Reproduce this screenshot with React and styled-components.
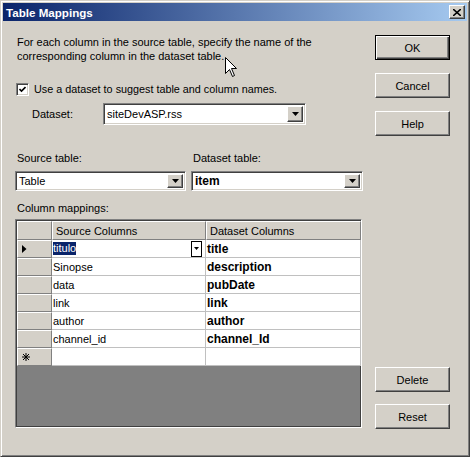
import React from 'react';
import styled, { createGlobalStyle, css } from 'styled-components';

const font = `"Liberation Sans", Arial, sans-serif`;

const GlobalStyle = createGlobalStyle`
    body {
        margin: 0;
        font-family: ${font};
        font-size: 11px;
        color: #000;
    }
`;

//Win2k 3d edges
const raised = css`
    border: 1px solid;
    border-color: #fff #404040 #404040 #fff;
    box-shadow: inset -1px -1px #808080, inset 1px 1px #d4d0c8;
`;

const sunken = css`
    border: 1px solid;
    border-color: #808080 #fff #fff #808080;
    box-shadow: inset 1px 1px #404040, inset -1px -1px #d4d0c8;
`;

const ScWindow = styled.div`
    position: relative;
    width: 470px;
    height: 457px;
    box-sizing: border-box;
    background: #d4d0c8;
    border: 1px solid;
    border-color: #d4d0c8 #404040 #404040 #d4d0c8;
    box-shadow: inset 1px 1px #fff, inset -1px -1px #808080;
    padding: 2px;
    display: flex;
    flex-direction: column;
`;

const ScTitleBar = styled.div`
    height: 18px;
    background: linear-gradient(to right, #0a246a, #a6caf0);
    display: flex;
    align-items: center;
    justify-content: space-between;
    padding: 0 2px 0 3px;
    color: #fff;
    font-weight: bold;
    font-size: 11.6px;
`;

const ScCloseButton = styled.div`
    width: 16px;
    height: 14px;
    box-sizing: border-box;
    background: #d4d0c8;
    ${raised};
    display: flex;
    align-items: center;
    justify-content: center;
`;

const ScBody = styled.div`
    flex: 1;
    display: flex;
    padding: 0 14px 0 12px;
    gap: 13px;
`;

const ScMain = styled.div`
    width: 347px;
    display: flex;
    flex-direction: column;
`;

const ScSide = styled.div`
    width: 75px;
    display: flex;
    flex-direction: column;
    padding-top: 14px;
`;

const ScIntro = styled.p`
    margin: 14px 0 0 2px;
    line-height: 14px;
`;

const ScCheckRow = styled.label`
    display: flex;
    align-items: center;
    gap: 5px;
    height: 16px;
    margin-top: 18px;
    padding-left: 1px;
    font-size: 10.8px;
`;

const ScCheckBox = styled.span`
    width: 13px;
    height: 13px;
    box-sizing: border-box;
    background: #fff;
    ${sunken};
    display: flex;
    align-items: center;
    justify-content: center;
`;

const ScDatasetRow = styled.div`
    display: flex;
    align-items: center;
    margin-top: 6px;
    padding-left: 17px;
`;

const ScDatasetLabel = styled.span`
    width: 71px;
`;

const ScLabel = styled.div`
    line-height: 14px;
    padding-left: 2px;
`;

const ScTablesGrid = styled.div`
    display: grid;
    grid-template-columns: 171px 172px;
    column-gap: 5px;
    row-gap: 6px;
    margin-top: 26px;
`;

const ScCombo = styled.div`
    width: ${p => p.$width}px;
    height: ${p => p.$height}px;
    box-sizing: border-box;
    background: #fff;
    ${sunken};
    padding: 2px;
    display: flex;
    align-items: stretch;
`;

const ScComboText = styled.span`
    flex: 1;
    display: flex;
    align-items: center;
    padding-left: 1px;
    font-weight: ${p => (p.$bold ? 'bold' : 'normal')};
    font-size: ${p => (p.$bold ? '12px' : '11px')};
`;

const ScDropButton = styled.span`
    width: 16px;
    box-sizing: border-box;
    background: #d4d0c8;
    ${raised};
    display: flex;
    align-items: center;
    justify-content: center;
`;

const ScMappingsLabel = styled(ScLabel)`
    margin-top: 10px;
`;

const ScGridWell = styled.div`
    margin-top: 4px;
    height: 209px;
    box-sizing: border-box;
    border: 1px solid;
    border-color: #808080 #fff #fff #808080;
    padding: 1px;
    background: #404040;
    overflow: hidden;
`;

const ScGridInner = styled.div`
    height: 100%;
    background: #808080;
`;

const ScGridRow = styled.div`
    display: grid;
    grid-template-columns: 35px 154px 155px;
    height: ${p => (p.$header ? 19 : 18)}px;
`;

const ScHeadCell = styled.div`
    background: #d4d0c8;
    box-sizing: border-box;
    border-style: solid;
    border-width: 1px;
    border-color: #fff #808080 #808080 #fff;
    display: flex;
    align-items: center;
    padding-left: 3px;
`;

const ScRowHead = styled(ScHeadCell)`
    padding-left: 4px;
`;

const ScCell = styled.div`
    background: #fff;
    box-sizing: border-box;
    border-right: 1px solid #c0c0c0;
    border-bottom: 1px solid #c0c0c0;
    display: flex;
    align-items: center;
    justify-content: space-between;
    padding-left: 1px;
    font-weight: ${p => (p.$bold ? 'bold' : 'normal')};
    font-size: ${p => (p.$bold ? '12px' : '11px')};
`;

const ScSelected = styled.span`
    background: #0a246a;
    color: #fff;
    line-height: 13px;
`;

const ScCellDrop = styled.span`
    width: 11px;
    height: 16px;
    box-sizing: border-box;
    border: 1px solid #000;
    background: #fff;
    margin-right: 3px;
    display: flex;
    align-items: center;
    justify-content: center;
`;

const ScButton = styled.div`
    width: 75px;
    height: 25px;
    box-sizing: border-box;
    background: #d4d0c8;
    ${p =>
        p.$default
            ? css`
                  border: 1px solid #000;
                  box-shadow: inset 1px 1px #fff, inset -1px -1px #404040, inset -2px -2px #808080;
              `
            : raised};
    margin-top: ${p => p.$top || 0}px;
    display: flex;
    align-items: center;
    justify-content: center;
    font-size: 11px;
`;

const ScCursor = styled.svg`
    position: absolute;
    left: 224px;
    top: 56px;
`;

const Arrow = ({ w = 7, h = 4 }) => (
    <svg width={w} height={h} viewBox="0 0 7 4">
        <polygon points="0,0 7,0 3.5,4" fill="#000" />
    </svg>
);

const Combo = ({ width, height, value, bold }) => (
    <ScCombo $width={width} $height={height}>
        <ScComboText $bold={bold}>{value}</ScComboText>
        <ScDropButton>
            <Arrow />
        </ScDropButton>
    </ScCombo>
);

const rows = [
    ['Sinopse', 'description'],
    ['data', 'pubDate'],
    ['link', 'link'],
    ['author', 'author'],
    ['channel_id', 'channel_Id'],
];

const App = () => (
    <>
        <GlobalStyle />
        <ScWindow>
            <ScTitleBar>
                <span>Table Mappings</span>
                <ScCloseButton>
                    <svg width="8" height="7" viewBox="0 0 8 7">
                        <path d="M0 0 L8 7 M8 0 L0 7" stroke="#000" strokeWidth="1.6" />
                    </svg>
                </ScCloseButton>
            </ScTitleBar>
            <ScBody>
                <ScMain>
                    <ScIntro>
                        For each column in the source table, specify the name of the
                        <br />
                        corresponding column in the dataset table.
                    </ScIntro>
                    <ScCheckRow>
                        <ScCheckBox>
                            <svg width="7" height="7" viewBox="0 0 7 7">
                                <path d="M0.5 3 L2.5 5 L6.5 1" stroke="#000" strokeWidth="1.6" fill="none" />
                            </svg>
                        </ScCheckBox>
                        Use a dataset to suggest table and column names.
                    </ScCheckRow>
                    <ScDatasetRow>
                        <ScDatasetLabel>Dataset:</ScDatasetLabel>
                        <Combo width={203} height={22} value="siteDevASP.rss" />
                    </ScDatasetRow>
                    <ScTablesGrid>
                        <ScLabel>Source table:</ScLabel>
                        <ScLabel>Dataset table:</ScLabel>
                        <Combo width={171} height={20} value="Table" />
                        <Combo width={172} height={20} value="item" bold />
                    </ScTablesGrid>
                    <ScMappingsLabel>Column mappings:</ScMappingsLabel>
                    <ScGridWell>
                        <ScGridInner>
                            <ScGridRow $header>
                                <ScHeadCell />
                                <ScHeadCell>Source Columns</ScHeadCell>
                                <ScHeadCell>Dataset Columns</ScHeadCell>
                            </ScGridRow>
                            <ScGridRow>
                                <ScRowHead>
                                    <svg width="5" height="8" viewBox="0 0 5 8">
                                        <polygon points="0,0 4.5,4 0,8" fill="#000" />
                                    </svg>
                                </ScRowHead>
                                <ScCell>
                                    <ScSelected>titulo</ScSelected>
                                    <ScCellDrop>
                                        <Arrow w={5} h={3} />
                                    </ScCellDrop>
                                </ScCell>
                                <ScCell $bold>title</ScCell>
                            </ScGridRow>
                            {rows.map(([src, dst]) => (
                                <ScGridRow key={src}>
                                    <ScRowHead />
                                    <ScCell>{src}</ScCell>
                                    <ScCell $bold>{dst}</ScCell>
                                </ScGridRow>
                            ))}
                            <ScGridRow>
                                <ScRowHead>
                                    <svg width="8" height="8" viewBox="0 0 8 8">
                                        <path d="M4 0 V8 M0 4 H8 M1 1 L7 7 M7 1 L1 7" stroke="#000" strokeWidth="1" />
                                    </svg>
                                </ScRowHead>
                                <ScCell />
                                <ScCell />
                            </ScGridRow>
                        </ScGridInner>
                    </ScGridWell>
                </ScMain>
                <ScSide>
                    <ScButton $default>OK</ScButton>
                    <ScButton $top={13}>Cancel</ScButton>
                    <ScButton $top={13}>Help</ScButton>
                    <ScButton $top={231}>Delete</ScButton>
                    <ScButton $top={12}>Reset</ScButton>
                </ScSide>
            </ScBody>
            <ScCursor width="13" height="21" viewBox="0 0 13 21">
                <path d="M0.5 0.5 L0.5 16.5 L4.5 12.5 L7.5 19.5 L9.5 18.5 L6.5 11.5 L11.5 11.5 Z" fill="#fff" stroke="#000" strokeWidth="1" />
            </ScCursor>
        </ScWindow>
    </>
);

export default App;
